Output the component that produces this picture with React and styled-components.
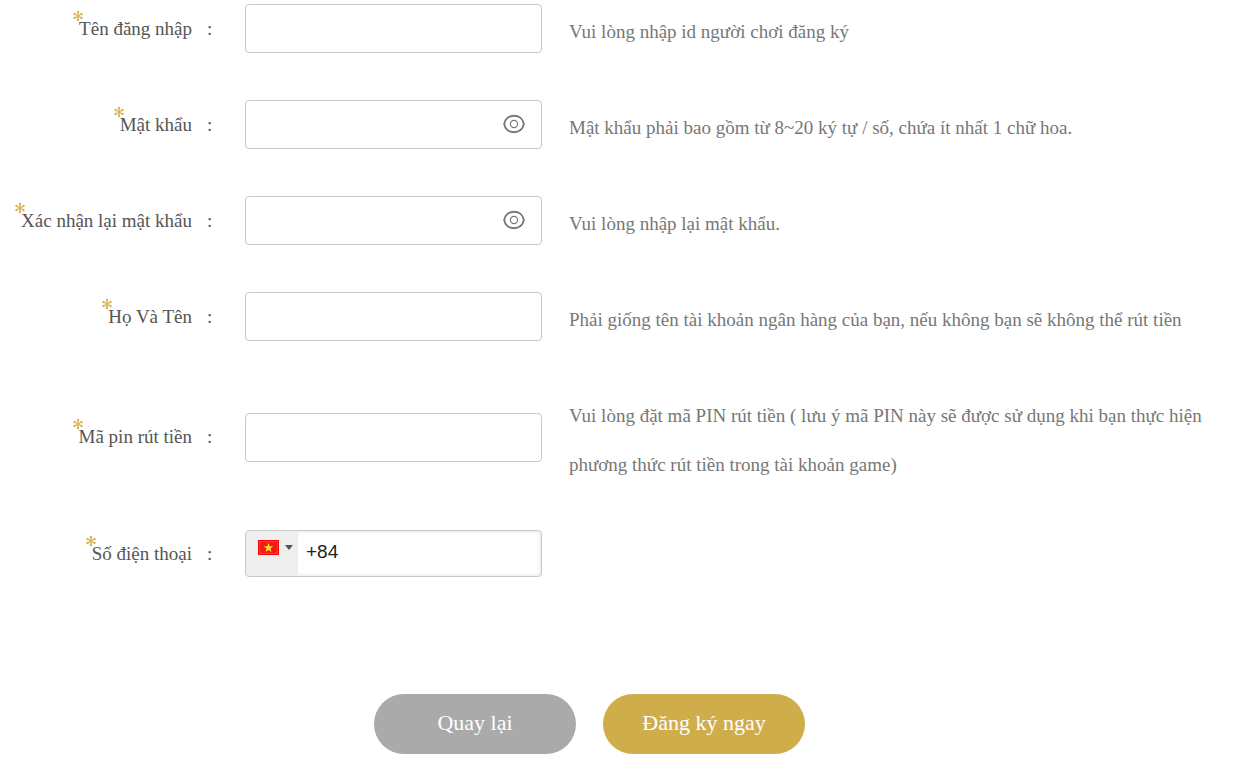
import React, { useState } from "react";
import styled, { createGlobalStyle } from "styled-components";

const GlobalStyle = createGlobalStyle`
  *, *::before, *::after { box-sizing: border-box; }
  body {
    margin: 0;
    background: #fff;
    font-family: "Liberation Serif", "Times New Roman", serif;
  }
`;

const Form = styled.form`
  padding: 1px 32px 14px 0;
`;

const Rows = styled.div`
  display: flex;
  flex-direction: column;
  gap: 41px;
`;

const Row = styled.div`
  display: grid;
  grid-template-columns: 218px 297px minmax(0, 1fr);
  column-gap: 27px;
  align-items: center;
`;

const Label = styled.label`
  display: flex;
  justify-content: flex-end;
  color: #555;
  font-size: 19px;
  line-height: 46px;
  white-space: nowrap;
`;

const Star = styled.svg`
  width: 10px;
  height: 12px;
  margin: 4px -4px 0 0;
`;

const Colon = styled.span`
  width: 26px;
  padding-left: 15px;
`;

const Field = styled.div`
  display: flex;
  align-items: center;
  height: ${(p) => (p.$phone ? "47px" : "49px")};
  border: 1px solid #c8c8c8;
  border-radius: 4px;
  background: #fff;
  box-shadow: ${(p) => (p.$phone ? "inset 0 0 4px #ddd" : "none")};
  overflow: hidden;
`;

const Input = styled.input`
  flex: 1;
  min-width: 0;
  height: 100%;
  padding: 0 8px 3px;
  border: 0;
  outline: 0;
  background: transparent;
  color: #222;
  font: 19px "Liberation Sans", Arial, sans-serif;
`;

const EyeButton = styled.button`
  display: flex;
  margin-right: 16px;
  padding: 0 0 2px;
  border: 0;
  background: none;
  cursor: pointer;
`;

const CountryButton = styled.button`
  display: flex;
  align-items: center;
  gap: 6px;
  width: 52px;
  height: 43px;
  padding: 0 4px 12px 12px;
  border: 0;
  background: #eee;
  cursor: pointer;
`;

const Hint = styled.p`
  margin: 0;
  padding-top: 6px;
  color: #777;
  font-size: 19px;
  line-height: 49px;
`;

const Actions = styled.div`
  display: flex;
  justify-content: center;
  gap: 27px;
  margin-top: 117px;
  padding-right: 34px;
`;

const Action = styled.button`
  width: 202px;
  height: 60px;
  padding: 0 0 3px;
  border: 0;
  border-radius: 30px;
  background: ${(p) => (p.$primary ? "#d0ad4b" : "#aaa")};
  color: #fff;
  font: 22px "Liberation Serif", "Times New Roman", serif;
  cursor: pointer;
`;

const RequiredMark = () => (
  <Star viewBox="0 0 10 12" aria-hidden="true">
    <path d="M5 6V2M5 6v4M5 6L1.5 4M5 6l3.5 2M5 6l3.5-2M5 6L1.5 8" stroke="#d9b25c" strokeWidth="1.4" strokeLinecap="round" fill="none" />
    <g fill="#d9b25c">
      <circle cx="5" cy="2" r="1.2" />
      <circle cx="5" cy="10" r="1.2" />
      <circle cx="1.5" cy="4" r="1.2" />
      <circle cx="8.5" cy="4" r="1.2" />
      <circle cx="1.5" cy="8" r="1.2" />
      <circle cx="8.5" cy="8" r="1.2" />
    </g>
  </Star>
);

const EyeIcon = () => (
  <svg width="22" height="20" viewBox="0 0 22 20" fill="none" stroke="#777">
    <path d="M1.2 10C2 5 6 1.8 11 1.8S20 5 20.8 10C20 15 16 18.2 11 18.2S2 15 1.2 10Z" strokeWidth="1.9" />
    <circle cx="11" cy="10" r="3.6" strokeWidth="1.2" />
  </svg>
);

const Flag = () => (
  <svg width="21" height="15" viewBox="0 0 21 15">
    <rect width="21" height="15" fill="#f00" />
    <rect x="1.5" y="1.5" width="18" height="12" fill="#f21a1a" stroke="#f64040" />
    <path d="M10.5 2.8l1.2 3.5h3.6l-2.9 2.2 1.1 3.6-3-2.2-3 2.2 1.1-3.6-2.9-2.2h3.6z" fill="#fd2" />
  </svg>
);

const Caret = () => (
  <svg width="8" height="5" viewBox="0 0 8 5">
    <path d="M0 0h8L4 5z" fill="#555" />
  </svg>
);

const fields = [
  { id: "username", label: "Tên đăng nhập", hint: "Vui lòng nhập id người chơi đăng ký" },
  { id: "password", label: "Mật khẩu", secret: true, hint: "Mật khẩu phải bao gồm từ 8~20 ký tự / số, chứa ít nhất 1 chữ hoa." },
  { id: "confirm", label: "Xác nhận lại mật khẩu", secret: true, hint: "Vui lòng nhập lại mật khẩu." },
  { id: "fullname", label: "Họ Và Tên", hint: "Phải giống tên tài khoản ngân hàng của bạn, nếu không bạn sẽ không thể rút tiền" },
  { id: "pin", label: "Mã pin rút tiền", hint: "Vui lòng đặt mã PIN rút tiền ( lưu ý mã PIN này sẽ được sử dụng khi bạn thực hiện phương thức rút tiền trong tài khoản game)" },
  { id: "phone", label: "Số điện thoại", phone: true },
];

function FormRow({ id, label, hint, secret, phone }) {
  const [visible, setVisible] = useState(false);
  const type = phone ? "tel" : secret && !visible ? "password" : "text";
  return (
    <Row>
      <Label htmlFor={id}>
        <RequiredMark />
        {label}
        <Colon>:</Colon>
      </Label>
      <Field $phone={phone}>
        {phone && (
          <CountryButton type="button" aria-label="Việt Nam +84">
            <Flag />
            <Caret />
          </CountryButton>
        )}
        <Input id={id} name={id} type={type} defaultValue={phone ? "+84" : ""} />
        {secret && (
          <EyeButton type="button" aria-label="Hiện mật khẩu" onClick={() => setVisible(!visible)}>
            <EyeIcon />
          </EyeButton>
        )}
      </Field>
      {hint && <Hint>{hint}</Hint>}
    </Row>
  );
}

export default function App() {
  return (
    <>
      <GlobalStyle />
      <Form onSubmit={(e) => e.preventDefault()}>
        <Rows>
          {fields.map((f) => (
            <FormRow key={f.id} {...f} />
          ))}
        </Rows>
        <Actions>
          <Action type="button">Quay lại</Action>
          <Action type="submit" $primary>Đăng ký ngay</Action>
        </Actions>
      </Form>
    </>
  );
}
